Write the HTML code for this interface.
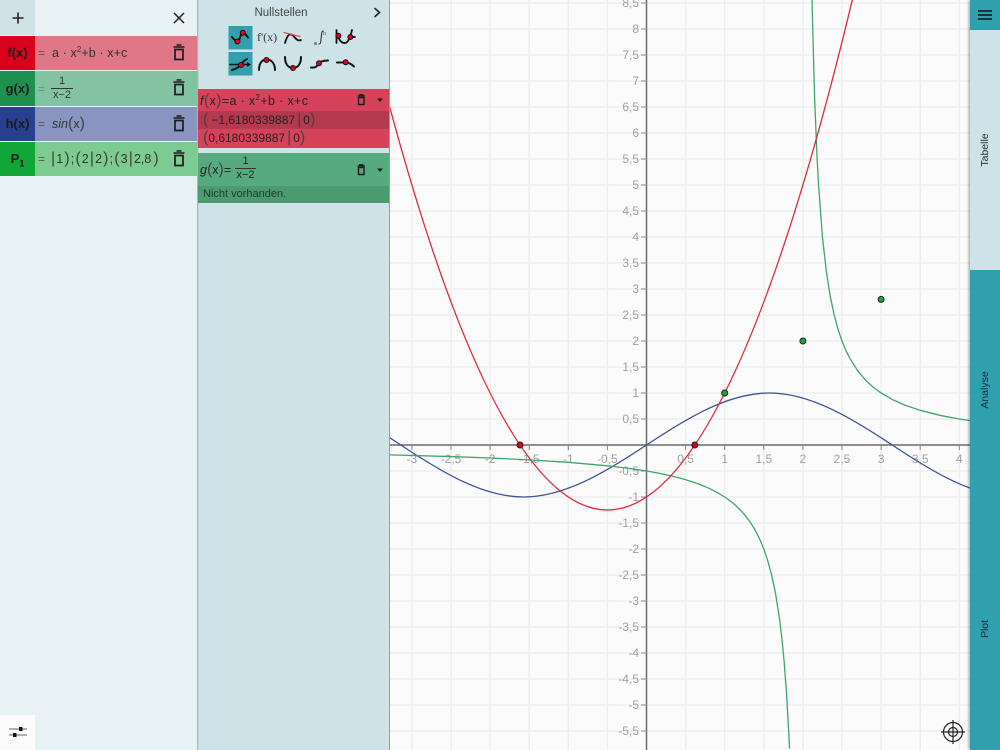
<!DOCTYPE html>
<html><head><meta charset="utf-8">
<style>
html,body{margin:0;padding:0;width:1000px;height:750px;overflow:hidden;background:#fbfbfb;font-family:"Liberation Sans",sans-serif;color:#222}
#w{position:relative;width:1000px;height:750px;overflow:hidden}
.a{position:absolute}
.t{position:absolute;white-space:nowrap}
.tag{position:absolute;left:0;width:35px;text-align:center;font-weight:bold;font-size:13px;line-height:35px;color:#1c1c1c}
.row{position:absolute;left:35px;width:162px}
.frac{position:absolute;text-align:center;font-size:11px;line-height:13px}
.frac div+div{border-top:1px solid #333}
.p{font-size:16px;font-weight:normal;color:#444}
sup{font-size:8px;line-height:0}
.rot{position:absolute;left:970px;width:30px;text-align:center}
.rot span{position:absolute;left:50%;top:50%;transform:translate(-50%,-50%) rotate(-90deg);font-size:10.5px;color:#1a2e33;white-space:nowrap}
</style></head><body><div id="w">

<svg class="a" style="left:390px;top:0" width="580" height="750" viewBox="390 0 580 750">
<rect x="390" y="0" width="580" height="750" fill="#fbfbfb"/>
<path stroke="#eeeeee" stroke-width="1.4" fill="none" d="M411.9 0V750M451 0V750M490.1 0V750M529.2 0V750M568.3 0V750M607.4 0V750M685.6 0V750M724.7 0V750M763.8 0V750M802.9 0V750M842 0V750M881.1 0V750M920.2 0V750M959.3 0V750M390 3H970M390 29H970M390 55H970M390 81H970M390 107H970M390 133H970M390 159H970M390 185H970M390 211H970M390 237H970M390 263H970M390 289H970M390 315H970M390 341H970M390 367H970M390 393H970M390 419H970M390 471H970M390 497H970M390 523H970M390 549H970M390 575H970M390 601H970M390 627H970M390 653H970M390 679H970M390 705H970M390 731H970"/>
<path stroke="#6a6a6a" stroke-width="1.5" fill="none" d="M390 445H970M646.5 0V750"/>
<path stroke="#888" stroke-width="1" fill="none" d="M411.9 445V450M451 445V450M490.1 445V450M529.2 445V450M568.3 445V450M607.4 445V450M685.6 445V450M724.7 445V450M763.8 445V450M802.9 445V450M842 445V450M881.1 445V450M920.2 445V450M959.3 445V450M641 3H647M641 29H647M641 55H647M641 81H647M641 107H647M641 133H647M641 159H647M641 185H647M641 211H647M641 237H647M641 263H647M641 289H647M641 315H647M641 341H647M641 367H647M641 393H647M641 419H647M641 471H647M641 497H647M641 523H647M641 549H647M641 575H647M641 601H647M641 627H647M641 653H647M641 679H647M641 705H647M641 731H647"/>
<g font-size="12" fill="#a0a0a0" font-family="Liberation Sans, sans-serif" text-anchor="end">
<text x="639" y="7">8,5</text><text x="639" y="33">8</text><text x="639" y="59">7,5</text><text x="639" y="85">7</text><text x="639" y="111">6,5</text><text x="639" y="137">6</text><text x="639" y="163">5,5</text><text x="639" y="189">5</text><text x="639" y="215">4,5</text><text x="639" y="241">4</text><text x="639" y="267">3,5</text><text x="639" y="293">3</text><text x="639" y="319">2,5</text><text x="639" y="345">2</text><text x="639" y="371">1,5</text><text x="639" y="397">1</text><text x="639" y="423">0,5</text><text x="639" y="475">-0,5</text><text x="639" y="501">-1</text><text x="639" y="527">-1,5</text><text x="639" y="553">-2</text><text x="639" y="579">-2,5</text><text x="639" y="605">-3</text><text x="639" y="631">-3,5</text><text x="639" y="657">-4</text><text x="639" y="683">-4,5</text><text x="639" y="709">-5</text><text x="639" y="735">-5,5</text>
</g>
<g font-size="12" fill="#a0a0a0" font-family="Liberation Sans, sans-serif" text-anchor="middle">
<text x="411.9" y="463">-3</text><text x="451" y="463">-2,5</text><text x="490.1" y="463">-2</text><text x="529.2" y="463">-1,5</text><text x="568.3" y="463">-1</text><text x="607.4" y="463">-0,5</text><text x="685.6" y="463">0,5</text><text x="724.7" y="463">1</text><text x="763.8" y="463">1,5</text><text x="802.9" y="463">2</text><text x="842" y="463">2,5</text><text x="881.1" y="463">3</text><text x="920.2" y="463">3,5</text><text x="959.3" y="463">4</text>
</g>
<g transform="translate(646.5 445) scale(78.2 -52)" fill="none" stroke-width="1.3" stroke-linejoin="round">
<path vector-effect="non-scaling-stroke" stroke="#3a5299" d="M-4.7124 1C-4.1888 1 -3.6652 .5236 -3.1416 0C-2.618 -.5236 -2.0944 -1 -1.5708 -1C-1.0472 -1 -.5236 -.5236 0 0C.5236 .5236 1.0472 1 1.5708 1C2.0944 1 2.618 .5236 3.1416 0C3.6652 -.5236 4.1888 -1 4.7124 -1"/>
<path vector-effect="non-scaling-stroke" stroke="#3fa46c" d="M-3.4 -.1852L-2.5 -.2222L-2 -.25L-1.5 -.2857L-1 -.3333L-.5 -.4L-.25 -.4444L0 -.5L.1 -.526L.2 -.556L.3 -.588L.4 -.625L.5 -.667L.6 -.714L.7 -.769L.8 -.833L.9 -.909L1 -1L1.05 -1.053L1.1 -1.111L1.15 -1.176L1.2 -1.25L1.25 -1.333L1.3 -1.429L1.35 -1.538L1.4 -1.667L1.45 -1.818L1.5 -2L1.55 -2.222L1.6 -2.5L1.65 -2.857L1.7 -3.333L1.73 -3.704L1.76 -4.167L1.79 -4.762L1.82 -5.556L1.829 -5.84"/>
<path vector-effect="non-scaling-stroke" stroke="#3fa46c" d="M2.1 10L2.12 8.333L2.15 6.667L2.18 5.556L2.2 5L2.25 4L2.3 3.333L2.35 2.857L2.4 2.5L2.45 2.222L2.5 2L2.55 1.818L2.6 1.667L2.7 1.429L2.8 1.25L2.9 1.111L3 1L3.15 .87L3.3 .769L3.5 .667L3.75 .571L4 .5L4.2 .4545"/>
<path vector-effect="non-scaling-stroke" stroke="#e3263c" d="M-3.3 6.59Q-.3 -10.21 2.7 8.99"/>
</g>
<g stroke="#222" stroke-width="1">
<circle cx="520" cy="445" r="3" fill="#d4001c"/><circle cx="694.8" cy="445" r="3" fill="#d4001c"/>
<circle cx="724.7" cy="393" r="3" fill="#17a63c"/><circle cx="802.9" cy="341" r="3" fill="#17a63c"/><circle cx="881.1" cy="299.4" r="3" fill="#17a63c"/>
</g>
<g fill="none" stroke="#222" stroke-width="1.2">
<circle cx="953" cy="732" r="9.5"/><circle cx="953" cy="732" r="4.5"/><path d="M953 720V744M941 732H965"/>
</g>
</svg>

<!-- left panel -->
<div class="a" style="left:0;top:0;width:197px;height:750px;background:#e8f1f4"></div>
<div class="a" style="left:0;top:0;width:35px;height:35px;background:#cfe3e7"></div>
<svg class="a" style="left:0;top:0" width="197" height="35"><path d="M18 12.500V23.500M12.500 18H23.500" stroke="#222" stroke-width="1.600" fill="none"/><path d="M174 13L184 23M184 13L174 23" stroke="#222" stroke-width="1.500" fill="none"/></svg>

<div class="tag" style="top:36px;height:34px;line-height:34px;background:#d8001b">f(x)</div>
<div class="row" style="top:36px;height:34px;background:#e07787"></div>
<div class="tag" style="top:71px;background:#1f8f50">g(x)</div>
<div class="row" style="top:71px;height:35px;background:#84c3a2"></div>
<div class="tag" style="top:107px;height:34px;line-height:34px;background:#293f90">h(x)</div>
<div class="row" style="top:107px;height:34px;background:#8795c0"></div>
<div class="tag" style="top:142px;height:34px;line-height:34px;background:#12a538">P<sub style="font-size:9px;line-height:0">1</sub></div>
<div class="row" style="top:142px;height:34px;background:#7ccc91"></div>

<div class="t" style="left:38px;top:46px;font-size:12px;color:#555">=</div>
<div class="t" style="left:52px;top:46px;font-size:12.500px;color:#333;letter-spacing:.1px">a · x<sup>2</sup>+b · x+c</div>
<div class="t" style="left:38px;top:82px;font-size:12px;color:#5a9a78">=</div>
<div class="frac" style="left:51px;top:75px;width:22px;color:#333"><div>1</div><div>x−2</div></div>
<div class="t" style="left:38px;top:117px;font-size:12px;color:#555">=</div>
<div class="t" style="left:52px;top:115px;font-size:12.500px;color:#333"><i>sin</i><span class="p">(</span>x<span class="p">)</span></div>
<div class="t" style="left:38px;top:152px;font-size:12px;color:#555">=</div>
<div class="t" style="left:51px;top:150px;width:110px;overflow:hidden;font-size:12.500px;color:#333;letter-spacing:1.100px"><span class="p">|</span>1<span class="p">)</span>;<span class="p">(</span>2<span class="p">|</span>2<span class="p">)</span>;<span class="p">(</span>3<span class="p">|</span><span style="letter-spacing:0">2,8</span><span class="p" style="margin-left:2px">)</span></div>

<svg class="a" style="left:173px;top:44px" width="12" height="124" fill="none" stroke="#1c1c1c">
<g><path stroke-width="1.700" d="M2 5.500H10V15.500H2Z"/><path stroke-width="1.500" d="M.5 3H11.500M3.500 1H8.500"/></g>
<g transform="translate(0 35)"><path stroke-width="1.700" d="M2 5.500H10V15.500H2Z"/><path stroke-width="1.500" d="M.5 3H11.500M3.500 1H8.500"/></g>
<g transform="translate(0 71)"><path stroke-width="1.700" d="M2 5.500H10V15.500H2Z"/><path stroke-width="1.500" d="M.5 3H11.500M3.500 1H8.500"/></g>
<g transform="translate(0 106)"><path stroke-width="1.700" d="M2 5.500H10V15.500H2Z"/><path stroke-width="1.500" d="M.5 3H11.500M3.500 1H8.500"/></g>
</svg>

<div class="a" style="left:0;top:715px;width:35px;height:35px;background:#fbfbfb"></div>
<svg class="a" style="left:0;top:715px" width="35" height="35"><path d="M9 14H27M9 20H27" stroke="#666" stroke-width="1"/><rect x="19" y="12" width="3.500" height="4" fill="#111"/><rect x="13" y="18" width="3.500" height="4" fill="#111"/></svg>

<!-- middle panel -->
<div class="a" style="left:197px;top:0;width:2px;height:750px;background:linear-gradient(90deg,#9aa8ab,#cee3e7)"></div>
<div class="a" style="left:199px;top:0;width:190px;height:750px;background:#cee3e7;border-right:1px solid #62b3bf"></div>
<div class="t" style="left:198px;top:6px;width:166px;text-align:center;font-size:11.500px;line-height:14px;color:#444">Nullstellen</div>
<svg class="a" style="left:198px;top:0" width="192" height="80">
<g transform="translate(-198 0)" fill="none" stroke-linecap="round">
<path d="M375 8.500L379.500 12.500L375 16.500" stroke="#222" stroke-width="1.600"/>
<rect x="228.500" y="26" width="24" height="23.500" fill="#30a0ae"/><rect x="228.500" y="52" width="24" height="23.500" fill="#30a0ae"/>
<path d="M232 37Q235 41 237.500 41.500C240 41.500 240 33 243 32.700C245 32.700 246 35 248 37.500" stroke="#111" stroke-width="2"/>
<path d="M285 43C287 36 289 33.500 291.500 34.500C295 36 296 42 301 40" stroke="#111" stroke-width="1.800"/>
<path d="M284 32.500L300 36.500" stroke="#e4504f" stroke-width="1.300"/>
<path d="M319 44Q320.500 44 320.700 42L321.700 33Q322 31 323.500 31" stroke="#333" stroke-width="1.100"/>
<circle cx="315.500" cy="43.500" r="1.500" fill="#777"/>
<path d="M336.500 30V43M338 36C340 43 345 45 348 41C350 38 351 34 352 30M350 37H355" stroke="#111" stroke-width="1.800"/>
<path d="M230 64.500H249" stroke="#111" stroke-width="1.500"/><path d="M247 62L251 64.500L247 67Z" fill="#111"/>
<path d="M232 70C236 69 239 67 241 64.500C243 61.500 245 60 247 59" stroke="#111" stroke-width="2"/>
<path d="M259 70C259 62 263 59.500 266.500 59.500C271 59.500 275 63 275 70" stroke="#111" stroke-width="2"/>
<path d="M285 57C285 65 289 68 293 68C297 68 301 65 301 57" stroke="#111" stroke-width="2"/>
<path d="M311 67.500C316 68 317 66 318.500 64C320 61.500 323 60.500 328 60.500" stroke="#111" stroke-width="2"/>
<path d="M337 62.500L345 62.500C349 62.500 351 64 354 66.500" stroke="#111" stroke-width="2"/>
<g fill="#e0001f" stroke="#111" stroke-width="1">
<circle cx="237.500" cy="41.500" r="2.500"/><circle cx="242.800" cy="32.800" r="2.500"/>
<circle cx="338.400" cy="35.800" r="2.500"/><circle cx="350.400" cy="37" r="2.500"/>
<circle cx="241" cy="65" r="2.500"/><circle cx="266.500" cy="60" r="2.500"/><circle cx="293" cy="68" r="2.500"/><circle cx="319" cy="63.300" r="2.500"/><circle cx="345.700" cy="62.300" r="2.500"/>
</g>
</g>
<text x="59" y="41" font-family="Liberation Serif, serif" font-size="12" fill="#333">f'(x)</text>
<text x="125" y="35" font-family="Liberation Serif, serif" font-size="6.500" fill="#555">b</text>
</svg>

<div class="a" style="left:198px;top:89px;width:191px;height:59px;background:#d6425a"></div>
<div class="a" style="left:198px;top:111px;width:191px;height:18px;background:#b63a4e"></div>
<div class="a" style="left:198px;top:153px;width:191px;height:50px;background:#55ab7e"></div>
<div class="a" style="left:198px;top:186px;width:191px;height:17px;background:#4b9a70"></div>

<div class="t" style="left:200px;top:92px;font-size:12.500px;color:#222;letter-spacing:.35px"><i>f</i><span class="p">(</span>x<span class="p">)</span>=a · x<sup>2</sup>+b · x+c</div>
<div class="t" style="left:203px;top:111px;font-size:12px;color:#222"><span class="p">(</span><span style="margin-left:3px">−1,6180339887</span><span class="p" style="margin:0 2px">|</span>0<span class="p">)</span></div>
<div class="t" style="left:203px;top:129px;font-size:12px;color:#222"><span class="p">(</span>0,6180339887<span class="p" style="margin:0 2px">|</span>0<span class="p">)</span></div>
<div class="t" style="left:200px;top:161px;font-size:12.500px;color:#222"><i>g</i><span class="p">(</span>x<span class="p">)</span>=</div>
<div class="frac" style="left:235px;top:155px;width:21px;color:#222"><div>1</div><div>x−2</div></div>
<div class="t" style="left:203px;top:188px;font-size:11px;color:#1f3a2c">Nicht vorhanden.</div>

<svg class="a" style="left:356px;top:94px" width="30" height="82" fill="none" stroke="#1c1c1c">
<path stroke-width="1.400" d="M2.500 3.500H8V10.500H2.500Z"/><path stroke-width="1.300" d="M1.500 2H9M3 .8H7.500"/>
<path d="M21 4.500H27L24 8Z" fill="#1c1c1c" stroke="none"/>
<g transform="translate(0 70)"><path stroke-width="1.400" d="M2.500 3.500H8V10.500H2.500Z"/><path stroke-width="1.300" d="M1.500 2H9M3 .8H7.500"/><path d="M21 4.500H27L24 8Z" fill="#1c1c1c" stroke="none"/></g>
</svg>

<!-- right tabs -->
<div class="a" style="left:970px;top:0;width:30px;height:750px;background:#30a0ae;box-shadow:-1px 0 3px rgba(0,0,0,.4)"></div>
<div class="a" style="left:970px;top:30px;width:30px;height:240px;background:#cee3e7"></div>
<svg class="a" style="left:970px;top:0" width="30" height="30"><path d="M8 11H22M8 15H22M8 19H22" stroke="#111" stroke-width="1.400"/></svg>
<div class="rot" style="top:130px;height:40px"><span>Tabelle</span></div>
<div class="rot" style="top:370px;height:40px"><span>Analyse</span></div>
<div class="rot" style="top:609px;height:40px"><span>Plot</span></div>
</div></body></html>
